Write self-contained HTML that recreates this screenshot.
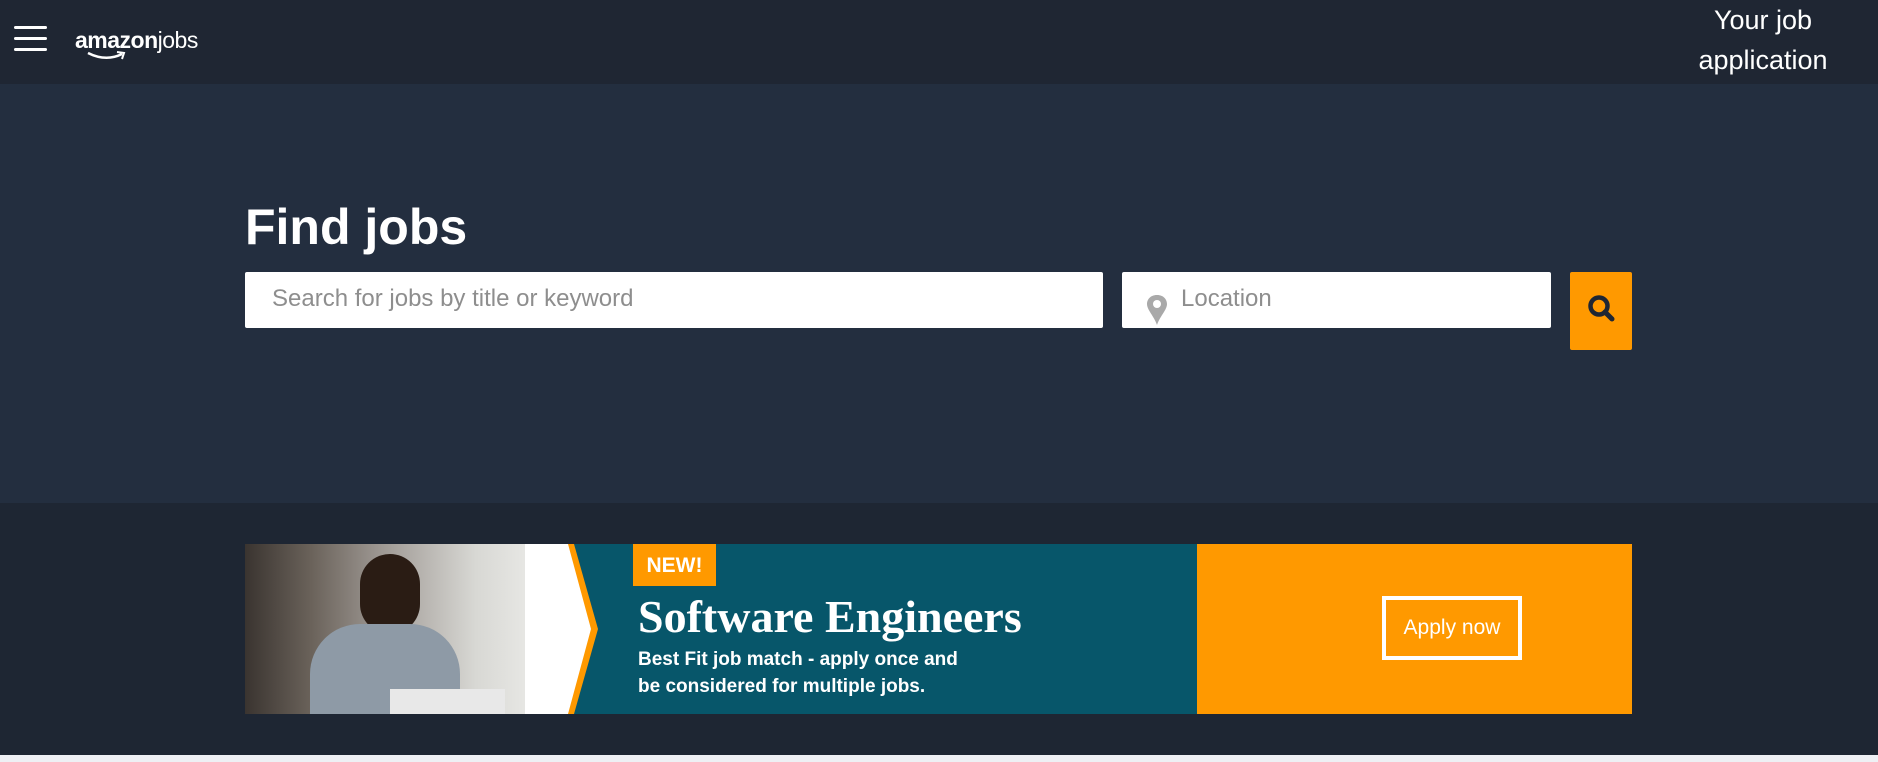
<!DOCTYPE html>
<html><head><style>
*{margin:0;padding:0;box-sizing:border-box}
body{width:1878px;height:762px;overflow:hidden;background:#1e2633;font-family:"Liberation Sans",sans-serif;position:relative}
.hdr{position:absolute;left:0;top:0;width:1878px;height:84px;background:#1f2633}
.hero{position:absolute;left:0;top:84px;width:1878px;height:419px;background:#232e3f}
.sec{position:absolute;left:0;top:503px;width:1878px;height:252px;background:#1e2633}
.foot{position:absolute;left:0;top:755px;width:1878px;height:7px;background:#eef0f4}
.ham{position:absolute;left:14px;width:33px;height:3px;background:#fff;border-radius:2px}
.abs{position:absolute}
</style></head><body>
<div class="hdr">
<div class="ham" style="top:26px"></div><div class="ham" style="top:37px"></div><div class="ham" style="top:48px"></div>
<div class="abs" style="left:75px;top:27px;color:#fff;font-size:23px;letter-spacing:-0.5px"><b style="font-weight:bold">amazon</b><span style="font-weight:normal">jobs</span></div>
<svg class="abs" style="left:86px;top:50px" width="42" height="12"><path d="M2 3 Q20 12 36 4" stroke="#fff" stroke-width="2.5" fill="none"/><path d="M31 2 L38 3 L36 9" stroke="#fff" stroke-width="2" fill="none"/></svg>
<div class="abs" style="left:1660px;top:0px;width:206px;text-align:center;color:#fff;font-size:27px;line-height:40px">Your job<br>application</div>
</div>
<div class="hero">
<div class="abs" style="left:245px;top:114px;color:#fff;font-size:50px;font-weight:bold">Find jobs</div>
<div class="abs" style="left:245px;top:188px;width:858px;height:56px;background:#fff;border-radius:2px"></div>
<div class="abs" style="left:272px;top:201px;color:#8e8e8e;font-size:24px">Search for jobs by title or keyword</div>
<div class="abs" style="left:1122px;top:188px;width:429px;height:56px;background:#fff;border-radius:2px"></div>
<svg class="abs" style="left:1146px;top:210px" width="22" height="32"><path d="M11 1 C4 1 1 6 1 10 C1 16 8 22 11 31 C14 22 21 16 21 10 C21 6 18 1 11 1 Z" fill="#a9a9a9"/><circle cx="11" cy="10" r="4" fill="#fff"/></svg>
<div class="abs" style="left:1181px;top:201px;color:#8e8e8e;font-size:24px">Location</div>
<div class="abs" style="left:1570px;top:188px;width:62px;height:78px;background:#f90;border-radius:2px"></div>
<svg class="abs" style="left:1586px;top:209px" width="32" height="32"><circle cx="13" cy="13" r="8.5" stroke="#1f2633" stroke-width="4.5" fill="none"/><path d="M19 19 L26 26" stroke="#1f2633" stroke-width="5" stroke-linecap="round"/></svg>
</div>
<div class="sec"></div>
<div class="abs" style="left:245px;top:544px;width:1387px;height:170px;background:#07566a;overflow:hidden">
<div class="abs" style="left:0;top:0;width:330px;height:170px;background:linear-gradient(90deg,#3a3430 0%,#6a625a 20%,#9b9590 40%,#d8d8d4 70%,#f5f5f3 100%)"></div>
<div class="abs" style="left:115px;top:10px;width:60px;height:80px;border-radius:30px;background:#2a1c14"></div>
<div class="abs" style="left:65px;top:80px;width:150px;height:90px;border-radius:50px 50px 0 0;background:#8e9aa6"></div>
<div class="abs" style="left:145px;top:145px;width:115px;height:25px;background:#e8e8e8"></div>
<svg class="abs" style="left:280px;top:0" width="80" height="170"><polygon points="0,0 48,0 72,85 48,170 0,170" fill="#fff"/><polygon points="43,0 50,0 74,85 50,170 43,170 66,85" fill="#f90"/><polygon points="49,0 80,0 80,170 49,170 73,85" fill="#07566a"/></svg>
<div class="abs" style="left:388px;top:0;width:83px;height:42px;background:#f90;color:#fff;font-size:21px;font-weight:bold;text-align:center;line-height:44px">NEW!</div>
<div class="abs" style="left:393px;top:46px;color:#fff;font-family:'Liberation Serif',serif;font-weight:bold;font-size:46px">Software Engineers</div>
<div class="abs" style="left:393px;top:102px;color:#fff;font-weight:bold;font-size:19px;line-height:27px">Best Fit job match - apply once and<br>be considered for multiple jobs.</div>
<div class="abs" style="left:952px;top:0;width:435px;height:170px;background:#f90"></div>
<div class="abs" style="left:1137px;top:52px;width:140px;height:64px;border:4px solid #fff;color:#fff;font-size:21px;text-align:center;line-height:56px">Apply now</div>
</div>
<div class="foot"></div>
</body></html>
